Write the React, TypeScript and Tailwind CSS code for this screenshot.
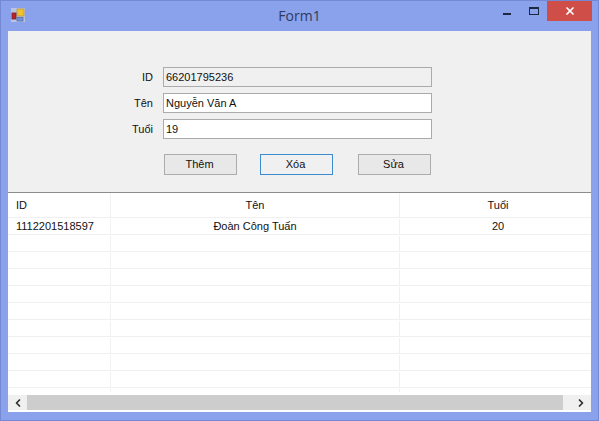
import { ChevronLeft, ChevronRight, X } from "lucide-react";

const columns = ["w-[103px]", "w-[289px]", "flex-1 pl-[5px]"];
const emptyRows = [0, 1, 2, 3, 4, 5, 6, 7, 8, 9];

function AppIcon() {
  return (
    <svg width="14" height="14" viewBox="0 0 14 14" className="shrink-0">
      <rect x="0" y="0" width="14" height="14" fill="#b9c4e2" />
      <rect x="6" y="1" width="7" height="7" fill="#f2c230" stroke="#b89a3a" strokeWidth="0.8" />
      <rect x="1" y="5" width="4" height="6" fill="#b8262c" stroke="#7c1d24" strokeWidth="0.8" />
      <rect x="6" y="9.5" width="6" height="3.5" fill="#6f95dc" stroke="#5a6ea8" strokeWidth="0.8" />
    </svg>
  );
}

function Field({ label, value, disabled }: { label: string; value: string; disabled?: boolean }) {
  return (
    <div className="flex items-center h-5">
      <span className="w-[155px] pr-[10px] text-right">{label}</span>
      <div
        className={`w-[269px] h-5 flex items-center pl-[2px] border border-[#ababab] ${
          disabled ? "bg-[#f0f0f0]" : "bg-white"
        }`}
      >
        {value}
      </div>
    </div>
  );
}

function FormButton({ label, focused }: { label: string; focused?: boolean }) {
  return (
    <div
      className={`w-[73px] h-[21px] flex items-center justify-center pr-[2px] border ${
        focused ? "border-[#3c8ad0] bg-[#f0f0f0]" : "border-[#acacac] bg-[#e8e8e8]"
      }`}
    >
      {label}
    </div>
  );
}

function Row({ cells, header }: { cells: string[]; header?: boolean }) {
  return (
    <div className={`flex shrink-0 border-b border-[#f0f0f0] ${header ? "h-[25px]" : "h-[17px] pt-px"}`}>
      {columns.map((col, i) => (
        <div
          key={col}
          className={`${col} flex items-center ${i === 0 ? "pl-2" : "justify-center"} ${
            i < 2 ? "border-r border-[#f0f0f0]" : ""
          }`}
        >
          {cells[i]}
        </div>
      ))}
    </div>
  );
}

export default function App() {
  return (
    <div
      className="w-[599px] h-[421px] bg-[#8aa1ec] flex flex-col text-[11px] text-[#111111] overflow-hidden border border-[#7488d4]"
      style={{ fontFamily: '"Liberation Sans", Arial, sans-serif' }}
    >
      {/* Title bar */}
      <div className="h-[30px] shrink-0 grid grid-cols-[1fr_auto_1fr] items-start px-[6px]">
        <div className="mt-[7px] ml-[4px]">
          <AppIcon />
        </div>
        <div
          className="text-[14px] text-[#2f3b5c] mt-[4px]"
          style={{ fontFamily: '"Open Sans", sans-serif' }}
        >
          Form1
        </div>
        <div className="flex justify-end">
          <div className="w-[8px] h-[2px] bg-[#1c2740] mt-[12px] mr-[18px]" />
          <div className="w-[10px] h-[8px] border border-[#1c2740] border-t-2 mt-[6px] mr-[8px]" />
          <div className="w-[45px] h-[20px] bg-[#cf4e48] flex items-center justify-center">
            <X size={12} strokeWidth={3.5} color="#ffffff" />
          </div>
        </div>
      </div>

      {/* Client area */}
      <div className="mx-[7px] h-[381px] flex flex-col bg-white">
        <div className="h-[162px] shrink-0 bg-[#f0f0f0] border-b border-[#8c8c8c] pt-[36px] flex flex-col">
          <div className="flex flex-col gap-[6px]">
            <Field label="ID" value="66201795236" disabled />
            <Field label="Tên" value="Nguyễn Văn A" />
            <Field label="Tuổi" value="19" />
          </div>
          <div className="flex pl-[156px] mt-[15px]">
            <FormButton label="Thêm" />
            <div className="ml-[23px]">
              <FormButton label="Xóa" focused />
            </div>
            <div className="ml-[25px]">
              <FormButton label="Sửa" />
            </div>
          </div>
        </div>

        {/* Data grid */}
        <div className="h-[199px] shrink-0 mb-[3px] flex flex-col overflow-hidden">
          <Row cells={["ID", "Tên", "Tuổi"]} header />
          <Row cells={["1112201518597", "Đoàn Công Tuấn", "20"]} />
          {emptyRows.map((r) => (
            <Row key={r} cells={["", "", ""]} />
          ))}
        </div>

        {/* Scrollbar */}
        <div className="h-[15px] shrink-0 bg-[#f0f0f0] flex items-center">
          <div className="w-[19px] flex justify-center">
            <ChevronLeft size={12} strokeWidth={3.5} color="#303030" />
          </div>
          <div className="flex-1 h-full bg-[#cdcdcd]" />
          <div className="w-[28px] pl-[8px] flex justify-center">
            <ChevronRight size={12} strokeWidth={3.5} color="#303030" />
          </div>
        </div>
      </div>
    </div>
  );
}
